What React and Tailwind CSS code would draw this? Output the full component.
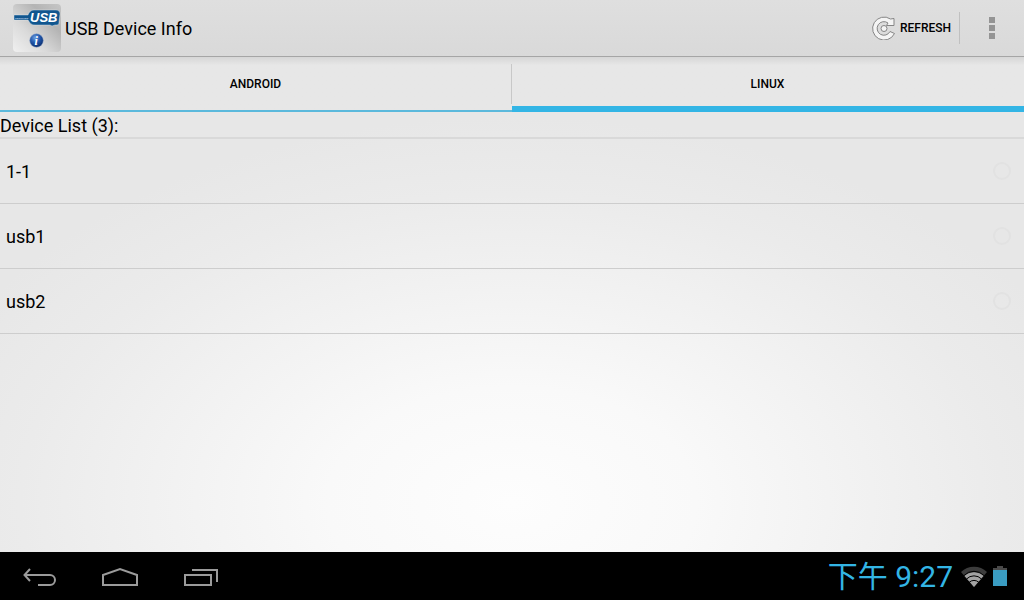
import React, { useState } from "react";

const TABS = ["Android", "Linux"];
const DEVICES = ["1-1", "usb1", "usb2"];

function AppIcon() {
  return (
    <svg width="48" height="48" viewBox="0 0 48 48" aria-hidden="true">
      <defs>
        <linearGradient id="tile" x1="0" y1="1" x2="1" y2="0">
          <stop offset="0" stopColor="#f0f0f0" />
          <stop offset="0.35" stopColor="#dadada" />
          <stop offset="0.7" stopColor="#b4b4b4" />
          <stop offset="1" stopColor="#c6c6c6" />
        </linearGradient>
        <radialGradient id="ball" cx="0.4" cy="0.3" r="0.7">
          <stop offset="0" stopColor="#6f9fe0" />
          <stop offset="0.5" stopColor="#2258ad" />
          <stop offset="1" stopColor="#0c2f70" />
        </radialGradient>
      </defs>
      <rect width="48" height="48" rx="4" fill="url(#tile)" />
      <path
        d="M1 11h14c1-3 3-5 6-5h22c3 0 4 2 4 4l-1 8c0 3-1 3-4 3l-3 1-2-1H22c-4 0-5-2-7-5H1z"
        fill="#11568f"
        stroke="#e8f0f6"
        strokeWidth="0.4"
      />
      <text x="2" y="14.500" fontSize="2.500" fontWeight="700" fill="#c9dcec" fontFamily="Liberation Sans, sans-serif">
        CERTIFIED
      </text>
      <text x="17" y="18" fontSize="13" fontWeight="700" fontStyle="italic" fill="#fff" fontFamily="Liberation Sans, sans-serif">
        USB
      </text>
      <circle cx="23.500" cy="36.500" r="6.800" fill="url(#ball)" stroke="#8fa3c4" strokeWidth="0.5" />
      <text x="21.500" y="41" fontSize="12" fontWeight="700" fontStyle="italic" fill="#fff" fontFamily="Liberation Serif, serif">
        i
      </text>
    </svg>
  );
}

function RefreshIcon() {
  return (
    <svg width="24" height="24" viewBox="0 0 24 24" fill="#f4f4f4" stroke="#858585" strokeWidth="1" aria-hidden="true">
      <path
        d="M22.500 17.500A11.500 11.500 0 1 1 18.500 3L22 2.500V9.500H14.500L16 7A6.800 6.800 0 1 0 18 15.500z"
        strokeLinejoin="round"
      />
      <circle cx="12" cy="12.500" r="3" />
    </svg>
  );
}

function BackIcon() {
  return (
    <svg width="34" height="20" viewBox="0 0 34 20" fill="none" stroke="#9b9b9b" strokeWidth="2" aria-hidden="true">
      <path d="M7 2L1.500 8 7 14M1.500 8H27a5 5 0 0 1 0 10H15" />
    </svg>
  );
}

function HomeIcon() {
  return (
    <svg width="38" height="20" viewBox="0 0 38 20" fill="none" stroke="#9b9b9b" strokeWidth="2" aria-hidden="true">
      <path d="M2 18V8L19 2l17 6v10z" />
    </svg>
  );
}

function RecentIcon() {
  return (
    <svg width="36" height="20" viewBox="0 0 36 20" fill="none" stroke="#9b9b9b" strokeWidth="2" aria-hidden="true">
      <path d="M2 8h26v10H2zM9 3h25v12" />
    </svg>
  );
}

function WifiIcon() {
  return (
    <svg width="26" height="22" viewBox="0 0 26 22" aria-hidden="true">
      <path d="M13 21L0 6a19 19 0 0 1 26 0z" fill="#3c3c3c" />
      <path d="M13 21L3.500 10a14 14 0 0 1 19 0z" fill="#a3a3a3" />
      <g fill="none" stroke="#000" strokeWidth="1">
        <path d="M3 9.500a14 14 0 0 1 20 0" />
        <path d="M5.500 13a10.500 10.500 0 0 1 15 0" />
        <path d="M8 16.500a7 7 0 0 1 10 0" />
      </g>
    </svg>
  );
}

function BatteryIcon() {
  return (
    <svg width="14" height="22" viewBox="0 0 14 22" aria-hidden="true">
      <path d="M4 0h6v2h4v3H0V2h4z" fill="#4a4a4a" />
      <path d="M0 4h14v16H0z" fill="#3a9cc2" />
    </svg>
  );
}

function App() {
  const [tab, setTab] = useState("Linux");
  const [selected, setSelected] = useState("");

  return (
    <div className="flex min-h-screen flex-col bg-[#e7e7e7] font-['Roboto','Noto_Sans_CJK_SC',sans-serif] text-black">
      <header className="flex h-[57px] items-center border-b border-[#a5a5a5] bg-linear-to-b from-[#dfdfdf] to-[#d9d9d9] pl-[13px]">
        <AppIcon />
        <h1 className="ml-1 flex-1 pt-0.5 text-lg">USB Device Info</h1>
        <button className="flex items-center gap-1 pr-2 text-[12px] font-medium uppercase">
          <RefreshIcon />
          Refresh
        </button>
        <div className="h-8 w-px bg-[#c0c0c0]" />
        <button aria-label="More options" className="flex h-full w-16 flex-col items-center justify-center gap-0.5">
          <span className="size-1.5 bg-[#949494]" />
          <span className="size-1.5 bg-[#949494]" />
          <span className="size-1.5 bg-[#949494]" />
        </button>
      </header>

      <main className="flex-1 bg-[radial-gradient(60%_78%_at_50%_90%,#fdfdfd_0%,#f9f9f9_30%,#f2f2f2_55%,#ebebeb_80%,#e7e7e7_100%)]">
        <div role="tablist" className="flex h-[55px] bg-linear-to-b from-[#d6d6d6] via-[#e7e7e7] via-15% to-[#e7e7e7]">
          {TABS.map((name) => (
            <button
              key={name}
              role="tab"
              aria-selected={tab === name}
              onClick={() => setTab(name)}
              className={
                "group flex flex-1 flex-col text-[12px] font-medium uppercase " +
                (tab === name ? "border-b-6 border-[#33b5e5]" : "border-b-2 border-[#5bb9dc]")
              }
            >
              <span className="mt-[7px] flex h-10 w-full items-center justify-center border-r border-[#c8c8c8] group-last:border-transparent">
                {name}
              </span>
            </button>
          ))}
        </div>

        <h2 className="h-[27px] border-b-2 border-[#d9d9d9] text-lg">Device List ({DEVICES.length}):</h2>
        <ul>
          {DEVICES.map((name) => (
            <li key={name} className="border-b border-[#cdcdcd]">
              <label className="flex h-16 items-center justify-between pr-[13px] pl-1.5 text-lg">
                <span className="pt-0.5">{name}</span>
                <input
                  type="radio"
                  name="device"
                  value={name}
                  checked={selected === name}
                  onChange={() => setSelected(name)}
                  className="size-[18px] appearance-none rounded-full border-2 border-[#e2e2e2] checked:bg-[#33b5e5]"
                />
              </label>
            </li>
          ))}
        </ul>
      </main>

      <nav className="flex h-12 items-center justify-between bg-black pt-0.5 pr-[17px] pl-[23px]">
        <div className="flex items-center gap-[44px]">
          <button aria-label="Back"><BackIcon /></button>
          <button aria-label="Home"><HomeIcon /></button>
          <button aria-label="Recent apps"><RecentIcon /></button>
        </div>
        <div className="flex items-center gap-1.5">
          <time className="mr-0.5 text-[30px] leading-none text-[#33b5e5]">下午 9:27</time>
          <WifiIcon />
          <BatteryIcon />
        </div>
      </nav>
    </div>
  );
}

export default App;
